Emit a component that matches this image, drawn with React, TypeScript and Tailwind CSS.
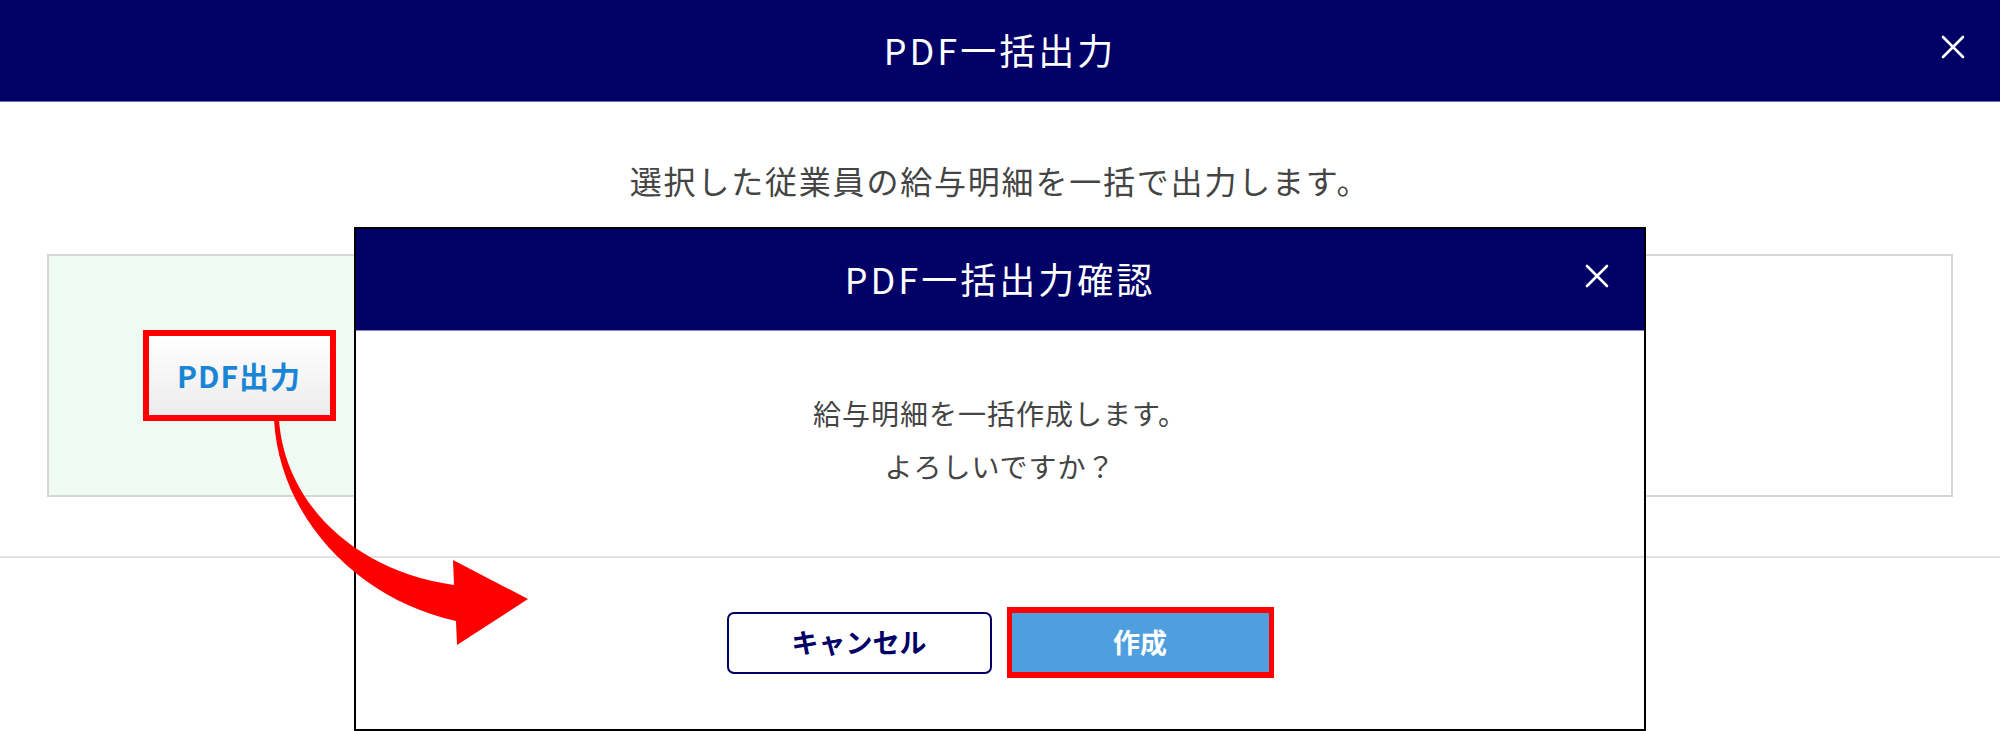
import React from "react";

const font = { fontFamily: '"Noto Sans CJK JP", "Noto Sans", sans-serif' };

function CloseIcon() {
  return (
    <svg width="24" height="24" viewBox="0 0 24 24" className="block">
      <path d="M2 2 L22 22 M22 2 L2 22" stroke="white" strokeWidth="2.6" strokeLinecap="round" />
    </svg>
  );
}

function CurvedArrow() {
  return (
    <svg className="absolute inset-0 pointer-events-none z-20" width="2000" height="731" viewBox="0 0 2000 731">
      <path
        d="M274 420 C280 520, 360 600, 456 621 L457 645 L528 599 L453 560 L454 585 C350 570, 285 500, 279 420 Z"
        fill="#ff0000"
      />
    </svg>
  );
}

export default function App() {
  return (
    <div className="relative w-[2000px] h-[731px] overflow-hidden bg-white" style={font}>
      {/* page behind */}
      <div className="flex flex-col h-full">
        <div className="relative h-[102px] bg-[#000066] border-b border-[#6a6aa8] flex items-center justify-center">
          <h1 className="text-white text-[36px] tracking-[3px] leading-none pb-1">PDF一括出力</h1>
          <button className="absolute right-[35px] top-[35px]">
            <CloseIcon />
          </button>
        </div>
        <p className="pt-[54px] text-center text-[32px] tracking-[1.8px] leading-[48px] text-[#444]">
          選択した従業員の給与明細を一括で出力します。
        </p>
        <div className="mx-[47px] mt-[50px] h-[243px] border-2 border-[#d6d6d6] flex">
          <div className="w-[380px] bg-[#effbf2] flex items-center justify-center">
            <div className="border-[6px] border-[#ff0000]">
              <button className="w-[181px] h-[79px] bg-gradient-to-b from-white to-[#ececec] text-[#1a85d6] font-bold text-[30px] tracking-[1px]">
                PDF出力
              </button>
            </div>
          </div>
          <div className="flex-1 bg-white"></div>
        </div>
        <div className="mt-[59px] h-[2px] bg-[#e2e2e2]"></div>
      </div>

      {/* confirm dialog */}
      <div className="absolute left-[354px] top-[227px] w-[1292px] h-[504px] border-2 border-black bg-white flex flex-col z-10">
        <div className="relative h-[102px] bg-[#000066] border-b border-[#8a8ad0] flex items-center justify-center">
          <h2 className="text-white text-[36px] tracking-[3px] leading-none pb-1">PDF一括出力確認</h2>
          <button className="absolute right-[35px] top-[35px]">
            <CloseIcon />
          </button>
        </div>
        <div className="h-[225px] flex flex-col items-center justify-center pb-2 text-[28px] tracking-[1px] leading-[53px] text-[#444]">
          <p>給与明細を一括作成します。</p>
          <p>よろしいですか？</p>
        </div>
        <div className="flex-1 border-t-2 border-[#e2e2e2] flex items-center justify-center gap-[15px] pb-[2px]">
          <button className="w-[265px] h-[62px] border-2 border-[#000066] rounded-[7px] bg-white text-[#000066] font-bold text-[27px]">
            キャンセル
          </button>
          <div className="border-x-[5px] border-y-[6px] border-[#ff0000]">
            <button className="block w-[257px] h-[59px] bg-[#4f9fdf] text-white font-bold text-[27px]">作成</button>
          </div>
        </div>
      </div>

      <CurvedArrow />
    </div>
  );
}
